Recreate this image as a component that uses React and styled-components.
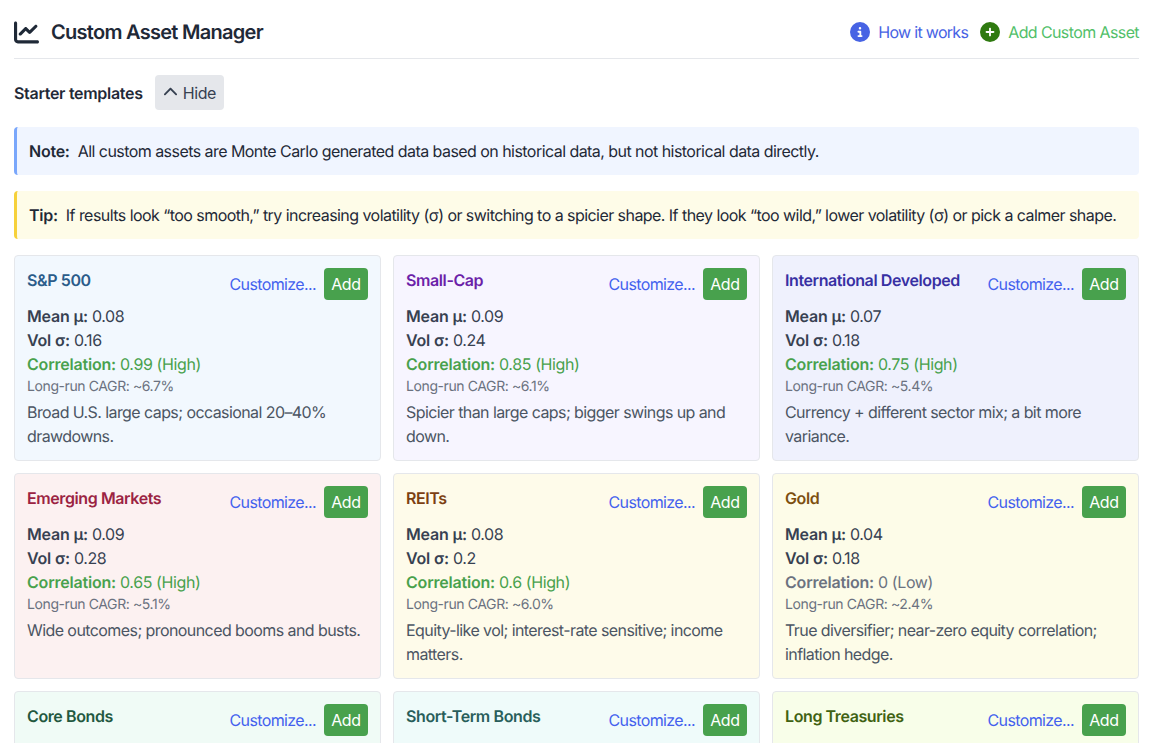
import React from "react";
import styled, { createGlobalStyle } from "styled-components";
import { FaChartLine, FaCircleInfo, FaCirclePlus, FaChevronUp } from "react-icons/fa6";

const Global = createGlobalStyle`
  html, body { margin: 0; padding: 0; background: #fff; height: 743px; overflow: hidden; }
  body { font-family: Inter, "Liberation Sans", sans-serif; color: #1f2937; font-size: 16px; line-height: 24px; letter-spacing: -0.55px; text-rendering: geometricPrecision; }
  * { box-sizing: border-box; }
`;

const Page = styled.div`
  padding: 14px 15px 0 14px;
`;
const Header = styled.header`
  display: flex;
  align-items: center;
  justify-content: space-between;
  height: 45px;
  padding-bottom: 8px;
  border-bottom: 1px solid #e5e7eb;
`;
const TitleGroup = styled.div`
  display: flex;
  align-items: center;
  gap: 12px;
  color: #1f2937;
  font-size: 20px;
  font-weight: 600;
  line-height: 28px;
  letter-spacing: -0.72px;
`;
const Actions = styled.div`
  display: flex;
  align-items: center;
  gap: 12px;
`;
const ActionLink = styled.a`
  display: flex;
  align-items: center;
  gap: 8px;
  color: ${(p) => p.$color};
  font-size: 16px;
  letter-spacing: ${(p) => p.$tracking}px;
  svg { color: ${(p) => p.$icon}; font-size: 20px; }
`;
const StarterRow = styled.div`
  display: flex;
  align-items: center;
  gap: 12px;
  margin-top: 16px;
`;
const StarterLabel = styled.span`
  font-weight: 600;
  color: #1f2937;
  letter-spacing: -0.3px;
`;
const HideButton = styled.button`
  display: flex;
  align-items: center;
  gap: 5px;
  height: 35px;
  padding: 0 8px;
  background: #e5e7eb;
  border: 0;
  border-radius: 4px;
  font: inherit;
  letter-spacing: -0.4px;
  color: #374151;
`;
const Banner = styled.div`
  margin-top: ${(p) => p.$top}px;
  padding: 12px 12px;
  border-left: 3px solid ${(p) => p.$edge};
  border-radius: 4px;
  background: ${(p) => p.$bg};
  color: #1f2937;
  height: 48px;
  white-space: nowrap;
  strong { font-weight: 600; margin-right: 8px; letter-spacing: -0.25px; }
`;
const Grid = styled.div`
  display: grid;
  grid-template-columns: repeat(3, 1fr);
  gap: 12px;
  margin-top: 16px;
`;
const Card = styled.div`
  height: 206px;
  padding: 12px;
  border: 1px solid #e5e7eb;
  border-radius: 4px;
  background: ${(p) => p.$bg};
`;
const CardTop = styled.div`
  display: flex;
  justify-content: space-between;
  align-items: flex-start;
  margin-bottom: 4px;
`;
const CardName = styled.h3`
  margin: 0;
  font-size: 16px;
  line-height: 24px;
  font-weight: 600;
  letter-spacing: -0.4px;
  color: ${(p) => p.$color};
`;
const CardActions = styled.div`
  display: flex;
  align-items: center;
  gap: 8px;
`;
const Customize = styled.a`
  color: #4361ee;
  font-size: 16px;
  letter-spacing: -0.62px;
`;
const AddButton = styled.button`
  width: 44px;
  height: 32px;
  padding: 0;
  border: 0;
  border-radius: 4px;
  background: #48a14d;
  color: #fff;
  font: inherit;
  letter-spacing: -0.3px;
`;
const Stat = styled.div`
  color: ${(p) => p.$color || "#374151"};
  letter-spacing: -0.4px;
  strong { font-weight: 600; letter-spacing: -0.2px; }
`;
const Cagr = styled.div`
  font-size: 14px;
  line-height: 22px;
  letter-spacing: -0.4px;
  color: #6b7280;
`;
const Desc = styled.p`
  margin: 2px 0 0;
  color: #4b5563;
  letter-spacing: -0.58px;
`;

const assets = [
  ["S&P 500", "#f2f8fe", "#2b5c8a", "0.08", "0.16", "0.99 (High)", "~6.7%", "Broad U.S. large caps; occasional 20–40% drawdowns."],
  ["Small-Cap", "#f7f5ff", "#6b21a8", "0.09", "0.24", "0.85 (High)", "~6.1%", "Spicier than large caps; bigger swings up and down."],
  ["International Developed", "#eff1fd", "#3730a3", "0.07", "0.18", "0.75 (High)", "~5.4%", "Currency + different sector mix; a bit more variance."],
  ["Emerging Markets", "#fcf1f1", "#9b2342", "0.09", "0.28", "0.65 (High)", "~5.1%", "Wide outcomes; pronounced booms and busts."],
  ["REITs", "#fefbea", "#7c3f12", "0.08", "0.2", "0.6 (High)", "~6.0%", "Equity-like vol; interest-rate sensitive; income matters."],
  ["Gold", "#fdfce8", "#7c4f10", "0.04", "0.18", "0 (Low)", "~2.4%", "True diversifier; near-zero equity correlation; inflation hedge."],
  ["Core Bonds", "#f0fbf6", "#22583f", "0.03", "0.06", "0.1 (Low)", "~2.8%", "Ballast for portfolios; steadier returns."],
  ["Short-Term Bonds", "#effbfa", "#285e5a", "0.02", "0.03", "0 (Low)", "~2.0%", "Lower risk and lower return."],
  ["Long Treasuries", "#f8fee9", "#3f6212", "0.04", "0.14", "-0.2 (Low)", "~3.0%", "Duration-heavy; can offset equity drawdowns."],
];

export default function App() {
  return (
    <Page>
      <Global />
      <Header>
        <TitleGroup>
          <FaChartLine size={25} />
          Custom Asset Manager
        </TitleGroup>
        <Actions>
          <ActionLink $color="#4763e4" $icon="#4763e4" $tracking={-0.7}><FaCircleInfo />How it works</ActionLink>
          <ActionLink $color="#52bf6a" $icon="#2f7a10" $tracking={-0.6}><FaCirclePlus />Add Custom Asset</ActionLink>
        </Actions>
      </Header>
      <StarterRow>
        <StarterLabel>Starter templates</StarterLabel>
        <HideButton><FaChevronUp size={15} />Hide</HideButton>
      </StarterRow>
      <Banner $top={17} $edge="#7aa7fb" $bg="#f0f5ff">
        <strong>Note:</strong>All custom assets are Monte Carlo generated data based on historical data, but not historical data directly.
      </Banner>
      <Banner $top={16} $edge="#f6d13b" $bg="#fefce8">
        <strong>Tip:</strong>If results look “too smooth,” try increasing volatility (σ) or switching to a spicier shape. If they look “too wild,” lower volatility (σ) or pick a calmer shape.
      </Banner>
      <Grid>
        {assets.map(([name, bg, color, mean, vol, corr, cagr, desc]) => (
          <Card key={name} $bg={bg}>
            <CardTop>
              <CardName $color={color}>{name}</CardName>
              <CardActions>
                <Customize>Customize...</Customize>
                <AddButton>Add</AddButton>
              </CardActions>
            </CardTop>
            <Stat><strong>Mean μ:</strong> {mean}</Stat>
            <Stat><strong>Vol σ:</strong> {vol}</Stat>
            <Stat $color={corr.includes("High") ? "#48a14d" : "#6b7280"}><strong>Correlation:</strong> {corr}</Stat>
            <Cagr>Long-run CAGR: {cagr}</Cagr>
            <Desc>{desc}</Desc>
          </Card>
        ))}
      </Grid>
    </Page>
  );
}
